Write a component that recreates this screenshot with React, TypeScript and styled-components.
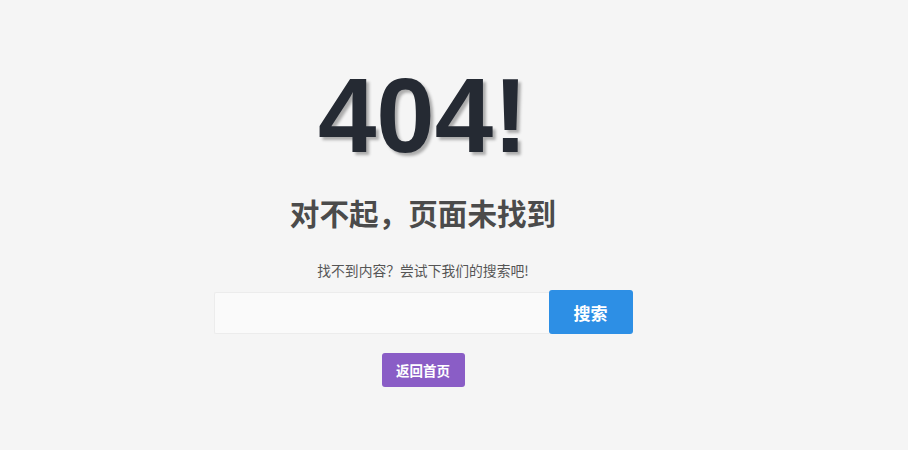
import styled, { createGlobalStyle } from "styled-components";

const GlobalStyle = createGlobalStyle`
  html, body {
    margin: 0;
    padding: 0;
    background: #f5f5f5;
  }
  body {
    font-family: "Liberation Sans", "Noto Sans CJK SC", sans-serif;
  }
`;

const Page = styled.div`
  width: 846px;
  height: 450px;
  display: flex;
  flex-direction: column;
  align-items: center;
  padding-top: 63px;
  box-sizing: border-box;
`;

const Code = styled.h1`
  margin: 0;
  font-family: "Liberation Sans", Arial, sans-serif;
  font-size: 105px;
  line-height: 105px;
  font-weight: 700;
  color: #252a33;
  text-shadow: 3px 3px 3px rgba(0, 0, 0, 0.3);
`;

const Title = styled.h2`
  margin: 30px 0 0;
  font-family: "Noto Sans CJK SC", sans-serif;
  font-size: 29.6px;
  line-height: 30px;
  font-weight: 700;
  color: #4b4b4b;
`;

const Hint = styled.p`
  margin: 32px 0 0;
  font-family: "Noto Sans CJK SC", sans-serif;
  font-size: 13.8px;
  line-height: 20px;
  color: #555;
`;

const SearchForm = styled.form`
  margin-top: 10px;
  display: flex;
  width: 419px;
  height: 44px;
`;

const SearchInput = styled.input`
  flex: 1;
  margin: 2px 0 0;
  height: 42px;
  box-sizing: border-box;
  border: 1px solid #ececec;
  border-right: none;
  border-radius: 2px 0 0 2px;
  background: #fafafa;
  outline: none;
  padding: 0 12px;
  font-size: 14px;
`;

const SearchButton = styled.button`
  width: 84px;
  height: 44px;
  border: none;
  border-radius: 3px;
  background: #2d8fe5;
  color: #fff;
  font-family: "Noto Sans CJK SC", sans-serif;
  font-size: 17px;
  font-weight: 700;
  cursor: pointer;
`;

const HomeButton = styled.a`
  margin-top: 19px;
  display: flex;
  align-items: center;
  justify-content: center;
  width: 83px;
  height: 34px;
  border-radius: 3px;
  background: #8a5dc6;
  color: #fff;
  font-family: "Noto Sans CJK SC", sans-serif;
  font-size: 13.5px;
  font-weight: 700;
  text-decoration: none;
`;

export default function App() {
  return (
    <>
      <GlobalStyle />
      <Page>
        <Code>404!</Code>
        <Title>对不起，页面未找到</Title>
        <Hint>找不到内容？尝试下我们的搜索吧!</Hint>
        <SearchForm onSubmit={(e) => e.preventDefault()}>
          <SearchInput type="text" />
          <SearchButton type="submit">搜索</SearchButton>
        </SearchForm>
        <HomeButton href="#">返回首页</HomeButton>
      </Page>
    </>
  );
}
